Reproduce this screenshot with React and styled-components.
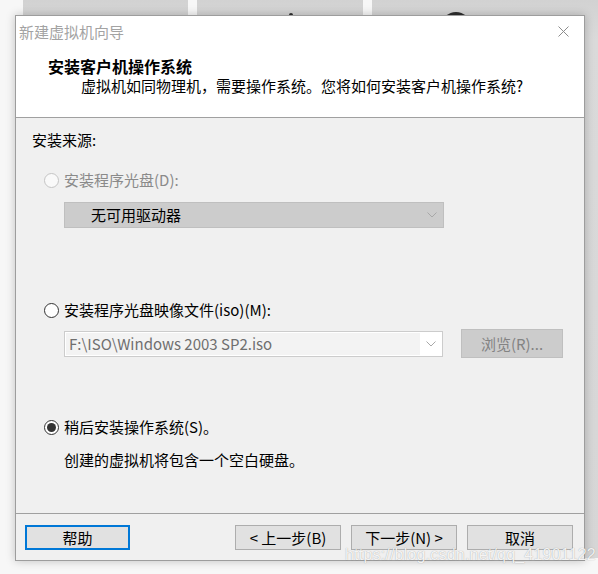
import React from 'react';
import styled, {createGlobalStyle, css} from 'styled-components';

const GlobalStyle = createGlobalStyle`
  html, body {
    margin: 0;
    background: #f7f7f7;
  }
  #root {
    width: 598px;
    height: 574px;
  }
`;

const ui = `"Noto Sans CJK SC", "Noto Sans", sans-serif`;

const Desktop = styled.div`
  position: relative;
  width: 598px;
  height: 574px;
  overflow: hidden;
  background: #f7f7f7;
  font-family: ${ui};
`;

const TileRow = styled.div`
  display: flex;
  gap: 9px;
  height: 558px;
  padding-left: 23px;
`;

const Tile = styled.div`
  position: relative;
  flex: ${p => (p.$grow ? '1' : `0 0 ${p.$width}px`)};
  background: linear-gradient(#d2d2d2, #dadada 40px, #d6d6d6);
`;

const Peek = styled.span`
  position: absolute;
  left: ${p => p.$left}px;
  top: ${p => p.$top}px;
  width: ${p => p.$size}px;
  height: ${p => p.$size}px;
  border-radius: 50%;
  background: #2d2d2d;
`;

const Window = styled.div`
  position: absolute;
  left: 15px;
  top: 15px;
  width: 570px;
  height: 546px;
  box-sizing: border-box;
  display: flex;
  flex-direction: column;
  border: 1px solid #9d9d9d;
  background: #f0f0f0;
  box-shadow: 0 0 9px rgba(0, 0, 0, 0.22);
`;

const TitleBar = styled.div`
  display: flex;
  align-items: center;
  justify-content: space-between;
  height: 31px;
  padding: 0 15px 0 3px;
  background: #fff;
  color: #a3a3a3;
  font-size: 15px;
`;

const Header = styled.div`
  height: 71px;
  padding: 9px 0 0 32px;
  box-sizing: border-box;
  background: #fff;
  border-bottom: 1px solid #a0a0a0;
`;

const HeaderTitle = styled.div`
  font-size: 16px;
  font-weight: 700;
  line-height: 20px;
  color: #000;
`;

const HeaderText = styled.div`
  margin-left: 33px;
  font-size: 15px;
  line-height: 20px;
  color: #000;
`;

const Content = styled.div`
  flex: 1;
  display: flex;
  flex-direction: column;
  padding: 12px 16px 0;
  font-size: 15px;
  line-height: 20px;
  color: #000;
`;

const Text = styled.div`
  margin-top: ${p => p.$top || 0}px;
  margin-left: ${p => p.$indent || 0}px;
  color: ${p => (p.$disabled ? '#8a8a8a' : '#000')};
`;

const RadioRow = styled.label`
  display: flex;
  align-items: center;
  gap: 5px;
  margin-top: ${p => p.$top}px;
  margin-left: 12px;
  color: ${p => (p.$disabled ? '#8a8a8a' : '#000')};
`;

const Radio = styled.span`
  position: relative;
  flex: 0 0 15px;
  width: 15px;
  height: 15px;
  box-sizing: border-box;
  border-radius: 50%;
  border: 1px solid ${p => (p.$disabled ? '#c4c4c4' : '#333')};
  background: ${p => (p.$disabled ? '#f9f9f9' : '#fff')};
  ${p => p.$checked && css`
    &::after {
      content: '';
      position: absolute;
      left: 2px;
      top: 2px;
      width: 9px;
      height: 9px;
      border-radius: 50%;
      background: #333;
    }
  `}
`;

const Select = styled.div`
  display: flex;
  align-items: center;
  justify-content: space-between;
  width: ${p => (p.$filled ? 380 : 379)}px;
  height: 26px;
  box-sizing: border-box;
  margin-top: ${p => p.$top || 0}px;
  margin-left: ${p => p.$indent || 0}px;
  border: 1px solid ${p => (p.$filled ? '#bfbfbf' : '#cccccc')};
  background: ${p => (p.$filled ? '#cccccc' : '#fff')};
  padding-right: 6px;
`;

const SelectValue = styled.span`
  ${p => p.$filled
    ? css`
      padding-left: 26px;
      color: #000;
    `
    : css`
      align-self: stretch;
      width: 354px;
      margin: 1px;
      padding-left: 3px;
      box-sizing: border-box;
      background: #f3f3f3;
      color: #6f6f6f;
      line-height: 22px;
    `}
`;

const FileRow = styled.div`
  display: flex;
  align-items: center;
  gap: 18px;
  margin-top: 9px;
  margin-left: 32px;
`;

const DisabledButton = styled.div`
  width: 102px;
  height: 29px;
  box-sizing: border-box;
  display: flex;
  align-items: center;
  justify-content: center;
  border: 1px solid #bfbfbf;
  background: #cccccc;
  color: #838383;
`;

const Footer = styled.div`
  display: flex;
  align-items: flex-start;
  height: 47px;
  padding: 11px 11px 0 9px;
  box-sizing: border-box;
  border-top: 1px solid #a0a0a0;
`;

const Spacer = styled.div`
  flex: 1;
`;

const ButtonGroup = styled.div`
  display: flex;
  gap: 10px;
`;

const Button = styled.button`
  width: ${p => (p.$focused ? 105 : 106)}px;
  height: 25px;
  box-sizing: border-box;
  padding: 0;
  border: ${p => (p.$focused ? '2px solid #0078d7' : '1px solid #adadad')};
  background: #e1e1e1;
  font-family: ${ui};
  font-size: 15px;
  line-height: 20px;
  color: #000;
`;

const Watermark = styled.div`
  position: absolute;
  left: 345px;
  top: 546px;
  font-family: "Liberation Sans", Arial, sans-serif;
  font-size: 16px;
  color: rgba(255, 255, 255, 0.88);
  text-shadow: 0 0 1px rgba(0, 0, 0, 0.35);
  letter-spacing: 0.2px;
`;

const Chevron = () => (
  <svg width="10" height="6" viewBox="0 0 10 6">
    <polyline points="0.5,0.5 5,5 9.5,0.5" fill="none" stroke="#a8a8a8" strokeWidth="1" />
  </svg>
);

const CloseIcon = () => (
  <svg width="11" height="11" viewBox="0 0 11 11">
    <path d="M0.5 0.5 L10.5 10.5 M10.5 0.5 L0.5 10.5" stroke="#8c8c8c" strokeWidth="1" />
  </svg>
);

export default function App() {
  return (
    <Desktop>
      <GlobalStyle />
      <TileRow>
        <Tile $width={165} />
        <Tile $width={166}>
          <Peek $left={92} $top={13} $size={4} />
        </Tile>
        <Tile $grow>
          <Peek $left={70} $top={12} $size={28} />
        </Tile>
      </TileRow>

      <Window>
        <TitleBar>
          <span>新建虚拟机向导</span>
          <CloseIcon />
        </TitleBar>
        <Header>
          <HeaderTitle>安装客户机操作系统</HeaderTitle>
          <HeaderText>虚拟机如同物理机，需要操作系统。您将如何安装客户机操作系统?</HeaderText>
        </Header>

        <Content>
          <Text>安装来源:</Text>

          <RadioRow $top={20} $disabled>
            <Radio $disabled />
            安装程序光盘(D):
          </RadioRow>
          <Select $top={12} $indent={32} $filled>
            <SelectValue $filled>无可用驱动器</SelectValue>
            <Chevron />
          </Select>

          <RadioRow $top={72}>
            <Radio />
            安装程序光盘映像文件(iso)(M):
          </RadioRow>
          <FileRow>
            <Select>
              <SelectValue>F:\ISO\Windows 2003 SP2.iso</SelectValue>
              <Chevron />
            </Select>
            <DisabledButton>浏览(R)...</DisabledButton>
          </FileRow>

          <RadioRow $top={59}>
            <Radio $checked />
            稍后安装操作系统(S)。
          </RadioRow>
          <Text $top={13} $indent={32}>创建的虚拟机将包含一个空白硬盘。</Text>
        </Content>

        <Footer>
          <Button $focused>帮助</Button>
          <Spacer />
          <ButtonGroup>
            <Button>&lt; 上一步(B)</Button>
            <Button>下一步(N) &gt;</Button>
            <Button>取消</Button>
          </ButtonGroup>
        </Footer>
      </Window>

      <Watermark>https://blog.csdn.net/qq_41901122</Watermark>
    </Desktop>
  );
}
